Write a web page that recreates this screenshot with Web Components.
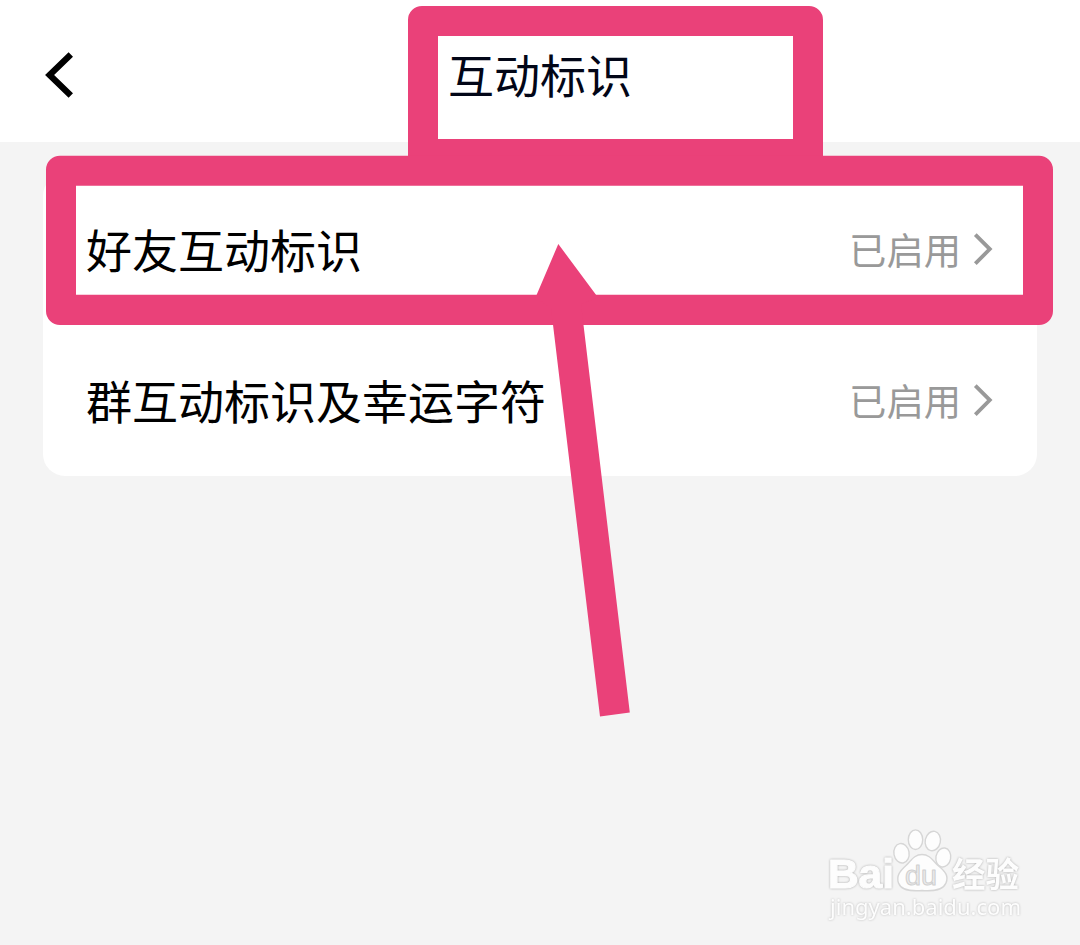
<!DOCTYPE html>
<html lang="zh-CN">
<head>
<meta charset="utf-8">
<title>互动标识</title>
<style>
html,body{margin:0;height:100%;overflow:hidden;background:#f4f4f4}
body{font-family:"Noto Sans CJK SC","Noto Sans",sans-serif}
</style>
</head>
<body>
<settings-page>
  <page-header slot="header">互动标识</page-header>
  <settings-card>
    <settings-row value="已启用">好友互动标识</settings-row>
    <settings-row value="已启用">群互动标识及幸运字符</settings-row>
  </settings-card>
  <guide-marks slot="overlay"></guide-marks>
  <site-watermark slot="overlay"></site-watermark>
</settings-page>
<script>
function define(name, html, setup) {
  const template = document.createElement('template');
  template.innerHTML = html;
  customElements.define(name, class extends HTMLElement {
    constructor() {
      super();
      this.attachShadow({ mode: 'open' }).append(template.content.cloneNode(true));
    }
    connectedCallback() { if (setup) setup(this); }
  });
}

define('settings-page', `
<style>
:host{display:flex;flex-direction:column;position:relative;width:1080px;height:945px;background:#f4f4f4;overflow:hidden}
main{padding:32px 43.5px 0 43px}
</style>
<slot name="header"></slot><main><slot></slot></main><slot name="overlay"></slot>`);

define('page-header', `
<style>
:host{display:grid;grid-template-columns:1fr auto 1fr;align-items:center;height:142px;box-sizing:border-box;padding:0 44px 0;background:#fff;color:#020617}
svg{display:block;width:32px;height:50px;margin-top:8px}
h1{margin:4px 0 0;font-size:46px;line-height:68px;font-weight:400}
</style>
<svg viewBox="0 0 32 50" fill="none" stroke="#000" stroke-width="6.3"><path d="M26.800 4.500 L5.600 25 L26.800 45.500"/></svg>
<h1><slot></slot></h1>`);

define('settings-card', `
<style>
:host{display:flex;flex-direction:column;background:#fff;border-radius:22px}
</style><slot></slot>`);

define('settings-row', `
<style>
:host{display:flex;align-items:center;justify-content:space-between;height:151px;padding:0 44px 0 43px;color:#000;font-size:46px;line-height:68px}
.label{padding-bottom:4px}
.end{display:flex;align-items:center;gap:11.5px;color:#999;font-size:37.3px}
.value{padding-bottom:2px}
svg{display:block;width:20px;height:36px;margin-bottom:2px}
</style>
<span class="label"><slot></slot></span>
<span class="end"><span class="value"></span><svg viewBox="0 0 20 36" fill="none" stroke="#999" stroke-width="3.8"><path d="M2.3 3.6 L16.8 18.1 L2.3 32.6"/></svg></span>`,
el => { el.shadowRoot.querySelector('.value').textContent = el.getAttribute('value'); });

define('guide-marks', `
<style>
:host{position:absolute;inset:0;pointer-events:none}
svg{display:block}
</style>
<svg width="1080" height="945" viewBox="0 0 1080 945" fill="#ea4179">
<path fill-rule="evenodd" d="M422 6H809a14 14 0 0 1 14 14V160H408V20a14 14 0 0 1 14-14zM438 36V139H793V36z"/>
<path fill-rule="evenodd" d="M60 155.700H1039a14 14 0 0 1 14 14V311a14 14 0 0 1-14 14H60a14 14 0 0 1-14-14V169.700a14 14 0 0 1 14-14zM76 185.700V294.800H1023V185.700z"/>
<path d="M558.300 244L598 297.500L581 304L629.800 712.500L600 716.500L551 308L535.500 297.500z"/>
</svg>`);

define('site-watermark', `
<style>
:host{position:absolute;left:820px;top:820px}
svg{display:block}
.mark{filter:drop-shadow(0 0 .8px #aaa)}
.url{filter:drop-shadow(0 0 .9px #bbb)}
</style>
<svg width="220" height="110" viewBox="820 820 220 110" fill="#fdfdfd" stroke-linejoin="round">
<text class="mark" x="828" y="888" font-family="Liberation Sans" font-weight="700" font-size="41" stroke="#fdfdfd" stroke-width="1.200" textLength="66" lengthAdjust="spacingAndGlyphs">Bai</text>
<g stroke="#d6d6d6" stroke-width="1.400">
<ellipse cx="901.500" cy="853.300" rx="7.600" ry="9.800" transform="rotate(-10 901.500 853.300)"/>
<ellipse cx="915.500" cy="839.700" rx="7.200" ry="9.800"/>
<ellipse cx="932.800" cy="841" rx="7.600" ry="9.800" transform="rotate(12 932.800 841)"/>
<ellipse cx="943.300" cy="857.500" rx="7.400" ry="9.600" transform="rotate(10 943.300 857.500)"/>
<path d="M922 854.500C930 854.500 933 861 938 865.500C945 871 949 876 946 883C943 890 935 891.500 922 890.500C909 891.500 901 890 898.500 883C896 876 900 871 906 865.500C911 861 914 854.500 922 854.500z"/>
</g>
<text x="905" y="885" font-family="Liberation Sans" font-size="27" fill="#ececec" stroke="#d0d0d0" stroke-width="1" textLength="32" lengthAdjust="spacingAndGlyphs">du</text>
<text class="mark" x="952" y="887" font-family="Noto Sans CJK SC" font-weight="700" font-size="34" textLength="67" lengthAdjust="spacingAndGlyphs">经验</text>
<text class="url" x="830" y="915" font-family="Noto Sans" font-size="22" textLength="191" lengthAdjust="spacingAndGlyphs">jingyan.baidu.com</text>
</svg>`);
</script>
</body>
</html>
